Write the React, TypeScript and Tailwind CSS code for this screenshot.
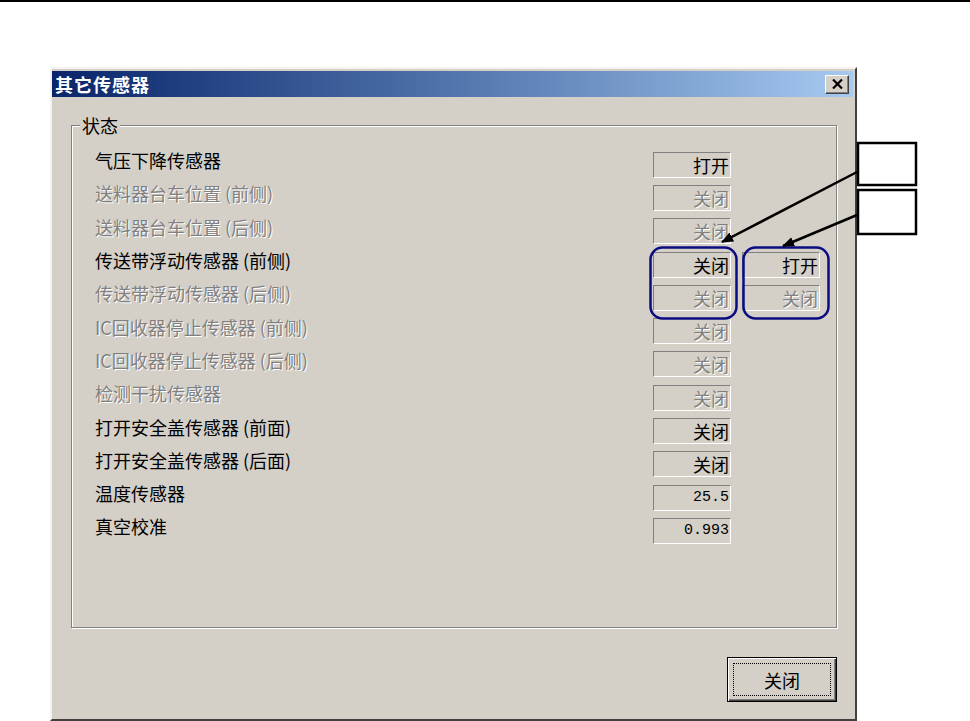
import React from 'react';

interface SensorRow {
  label: string;
  enabled: boolean;
  value: string;
  numeric?: boolean;
  extra?: { value: string; enabled: boolean };
}

const rows: SensorRow[] = [
  { label: '气压下降传感器', enabled: true, value: '打开' },
  { label: '送料器台车位置 (前侧)', enabled: false, value: '关闭' },
  { label: '送料器台车位置 (后侧)', enabled: false, value: '关闭' },
  { label: '传送带浮动传感器 (前侧)', enabled: true, value: '关闭', extra: { value: '打开', enabled: true } },
  { label: '传送带浮动传感器 (后侧)', enabled: false, value: '关闭', extra: { value: '关闭', enabled: false } },
  { label: 'IC回收器停止传感器 (前侧)', enabled: false, value: '关闭' },
  { label: 'IC回收器停止传感器 (后侧)', enabled: false, value: '关闭' },
  { label: '检测干扰传感器', enabled: false, value: '关闭' },
  { label: '打开安全盖传感器 (前面)', enabled: true, value: '关闭' },
  { label: '打开安全盖传感器 (后面)', enabled: true, value: '关闭' },
  { label: '温度传感器', enabled: true, value: '25.5', numeric: true },
  { label: '真空校准', enabled: true, value: '0.993', numeric: true },
];

const enabledText = 'text-black';
const disabledText = 'text-[#808080] [text-shadow:1px_1px_0_#ffffff]';

function ValueBox({ value, enabled, numeric }: { value: string; enabled: boolean; numeric?: boolean }) {
  return (
    <div className="h-[26px] w-[78px] border border-t-[#808080] border-l-[#808080] border-r-white border-b-white flex items-center justify-end pr-[1px]">
      <span
        className={
          (numeric ? "font-['Liberation_Mono',monospace] text-[15px] " : 'text-[18px] ') +
          'leading-none ' +
          (enabled ? enabledText : disabledText)
        }
      >
        {value}
      </span>
    </div>
  );
}

function Annotations() {
  return (
    <svg className="absolute left-0 top-0 pointer-events-none" width="970" height="721" viewBox="0 0 970 721">
      <defs>
        <marker id="head" viewBox="0 0 12 10" refX="11" refY="5" markerWidth="12" markerHeight="10" markerUnits="userSpaceOnUse" orient="auto">
          <path d="M0 0 L12 5 L0 10 Z" fill="#000" />
        </marker>
      </defs>
      <rect x="650.5" y="245.5" width="86" height="71" rx="12" fill="none" stroke="#0c0c82" strokeWidth="2.5" />
      <rect x="743.5" y="245.5" width="85" height="71" rx="12" fill="none" stroke="#0c0c82" strokeWidth="2.5" />
      <line x1="857" y1="170" x2="722" y2="240" stroke="#000" strokeWidth="2.5" markerEnd="url(#head)" />
      <line x1="857" y1="213" x2="783" y2="244" stroke="#000" strokeWidth="2.5" markerEnd="url(#head)" />
      <rect x="858" y="141" width="58" height="42" fill="#fff" stroke="#000" strokeWidth="2.5" />
      <rect x="858" y="188" width="58" height="44" fill="#fff" stroke="#000" strokeWidth="2.5" />
    </svg>
  );
}

export default function App() {
  return (
    <div className="relative w-[970px] h-[721px] bg-white border-t-2 border-black overflow-hidden font-['Noto_Sans_CJK_SC',sans-serif]">
      <div className="ml-[50px] mt-[65px] w-[807px] h-[654px] bg-[#d4d0c8] border-2 border-t-[#f4f3ef] border-l-[#f4f3ef] border-r-[#404040] border-b-[#404040] pt-[2px] pr-[2px] flex flex-col">
        {/* title bar */}
        <div className="h-[26px] flex items-center justify-between pl-[3px] pr-[4px] bg-gradient-to-r from-[#0a246a] to-[#a6caf0]">
          <span className="text-white font-bold text-[18px] leading-none tracking-[1px]">其它传感器</span>
          <button className="w-[24px] h-[19px] bg-[#d4d0c8] border border-t-white border-l-white border-r-[#404040] border-b-[#404040] shadow-[inset_-1px_-1px_0_#808080] flex items-center justify-center">
            <svg width="11" height="10" viewBox="0 0 11 10">
              <path d="M1 0.5 L10 9.5 M10 0.5 L1 9.5" stroke="#000" strokeWidth="2.2" />
            </svg>
          </button>
        </div>

        {/* group box */}
        <div className="mt-[28px] ml-[19px] mr-[16px] h-[503px] border border-[#808080] shadow-[1px_1px_0_#ffffff,inset_1px_1px_0_#ffffff] flex flex-col">
          <span className="-mt-[11px] ml-[8px] self-start px-[2px] bg-[#d4d0c8] text-[18px] leading-[20px] text-black">状态</span>
          <div className="mt-[13px] pl-[23px] grid grid-cols-[547px_78px_78px] gap-x-[11px] auto-rows-[33.3px] items-center">
            {rows.map((r) => (
              <React.Fragment key={r.label}>
                <span className={'text-[18px] leading-none pb-[9px] whitespace-nowrap ' + (r.enabled ? enabledText : disabledText)}>
                  {r.label}
                </span>
                <ValueBox value={r.value} enabled={r.enabled} numeric={r.numeric} />
                {r.extra ? <ValueBox value={r.extra.value} enabled={r.extra.enabled} /> : <span />}
              </React.Fragment>
            ))}
          </div>
        </div>

        {/* bottom button */}
        <div className="flex justify-end mt-[29px] mr-[16px]">
          <button className="w-[110px] h-[45px] border border-black bg-[#d4d0c8] shadow-[inset_1px_1px_0_#ffffff,inset_-1px_-1px_0_#404040,inset_-2px_-2px_0_#808080] p-[5px]">
            <div className="w-full h-full border border-dotted border-black flex items-center justify-center">
              <span className="text-[18px] leading-none text-black">关闭</span>
            </div>
          </button>
        </div>
      </div>
      <Annotations />
    </div>
  );
}
